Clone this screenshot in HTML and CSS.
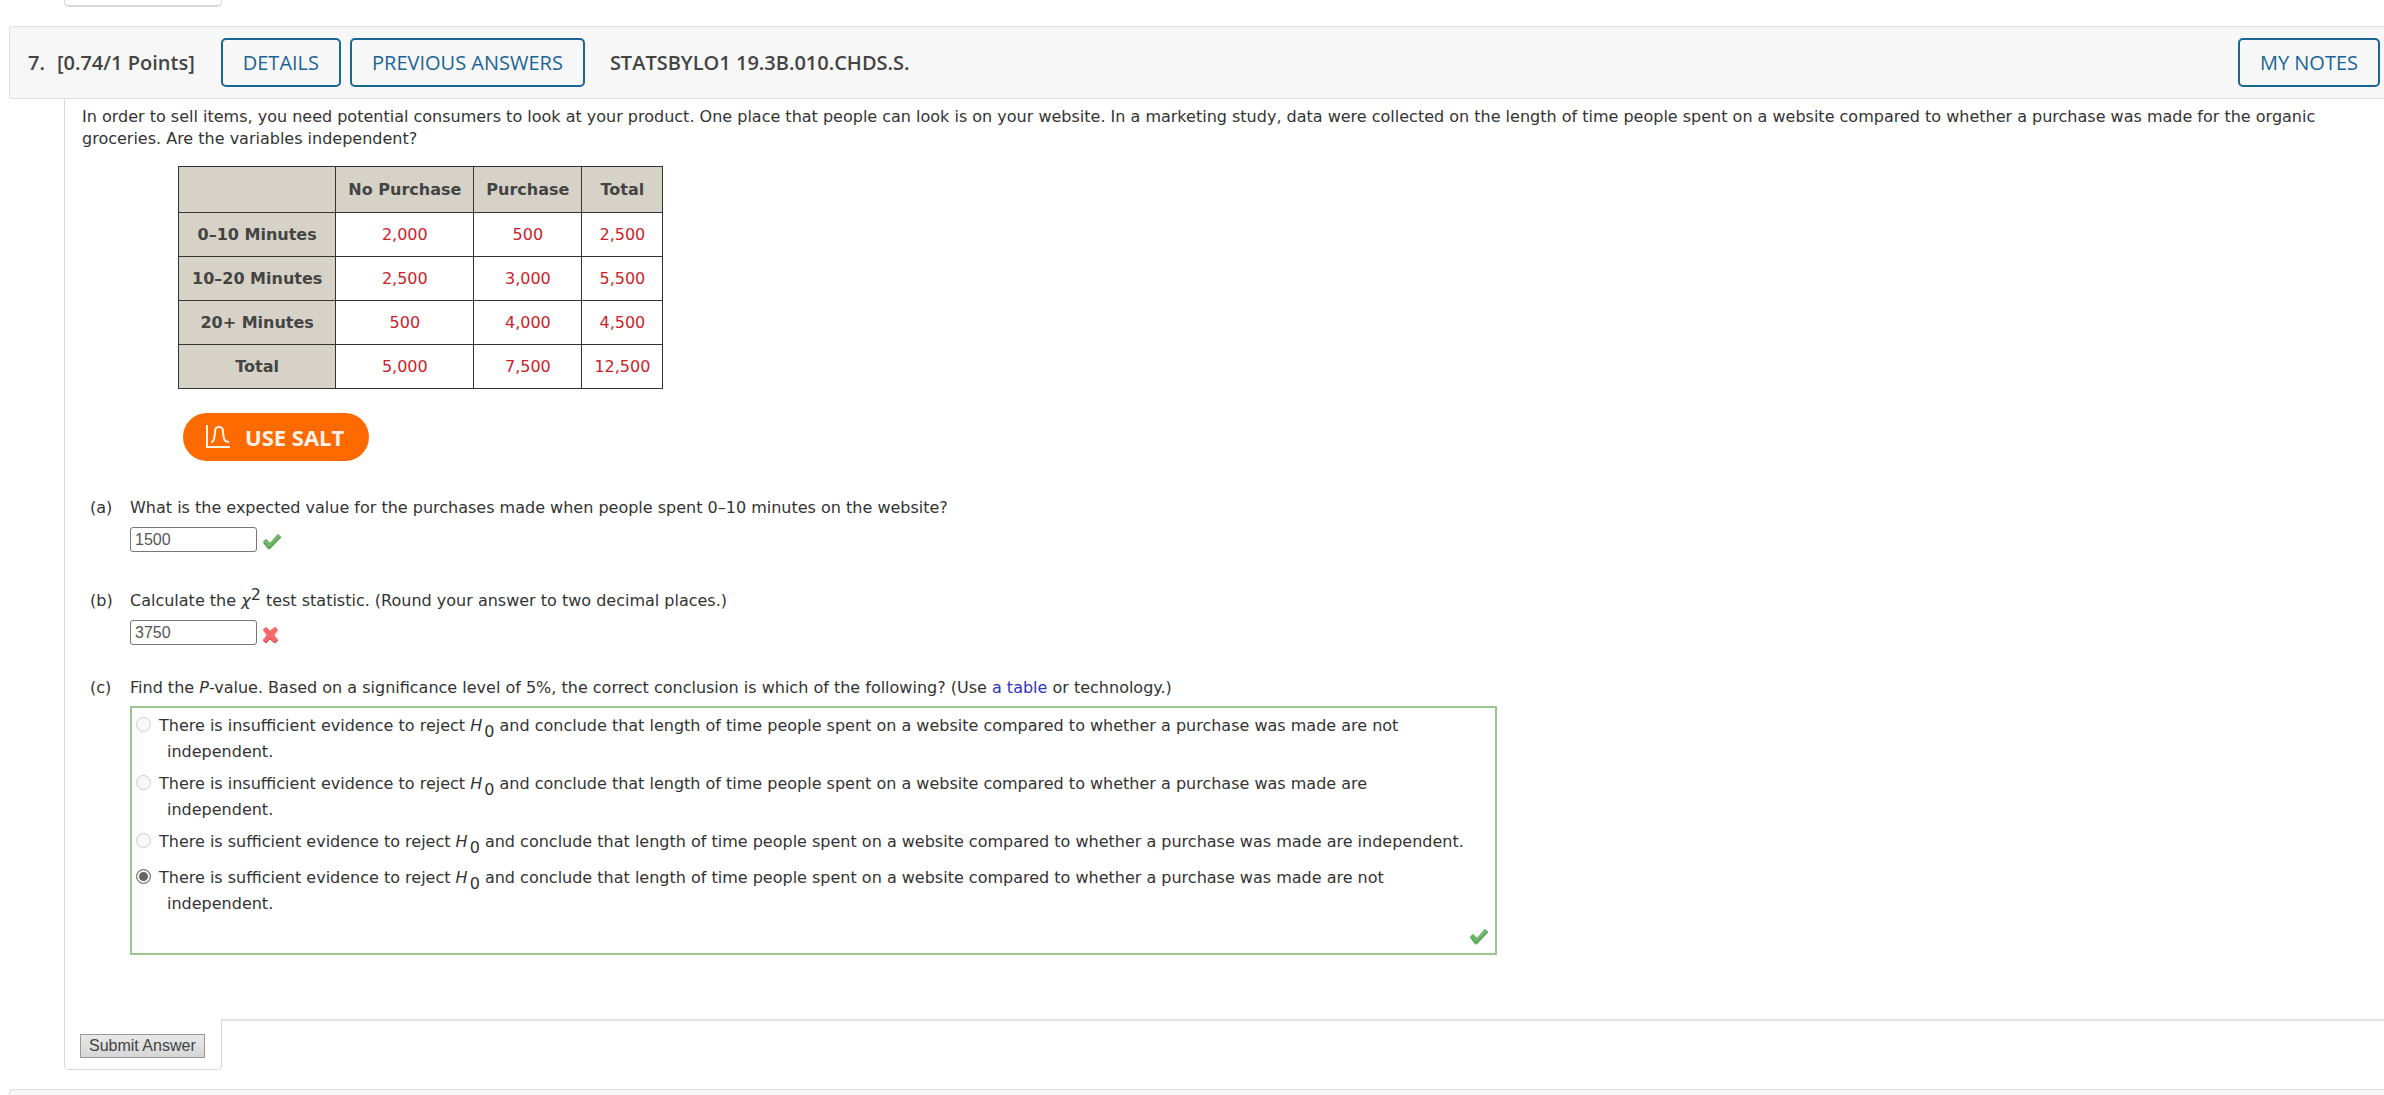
FILE: index.html
```html
<!DOCTYPE html>
<html lang="en">
<head>
  <meta charset="UTF-8" />
  <meta name="viewport" content="width=device-width, initial-scale=1.0"/>
  <title>Question 7</title>
  <link rel="stylesheet" href="styles.css">
</head>
<body>
  <!-- end of the previous question -->
  <div class="previous-tab"></div>

  <section class="question">
    <header class="question-header">
      <span class="number">7.</span>
      <span class="points">[0.74/1 Points]</span>
      <button type="button" class="header-btn">DETAILS</button>
      <button type="button" class="header-btn">PREVIOUS ANSWERS</button>
      <strong class="question-name">STATSBYLO1 19.3B.010.CHDS.S.</strong>
      <button type="button" class="header-btn notes">MY NOTES</button>
    </header>

    <form>
      <div class="question-body">
        <p class="intro">In order to sell items, you need potential consumers to look at your product. One place that people can look is on your website. In a marketing study, data were collected on the length of time people spent on a website compared to whether a purchase was made for the organic groceries. Are the variables independent?</p>

        <table class="data">
          <thead>
            <tr><th></th><th scope="col">No Purchase</th><th scope="col">Purchase</th><th scope="col">Total</th></tr>
          </thead>
          <tbody>
            <tr><th scope="row">0–10 Minutes</th><td>2,000</td><td>500</td><td>2,500</td></tr>
            <tr><th scope="row">10–20 Minutes</th><td>2,500</td><td>3,000</td><td>5,500</td></tr>
            <tr><th scope="row">20+ Minutes</th><td>500</td><td>4,000</td><td>4,500</td></tr>
            <tr><th scope="row">Total</th><td>5,000</td><td>7,500</td><td>12,500</td></tr>
          </tbody>
        </table>

        <button type="button" class="salt">
          <svg width="26" height="24" viewBox="0 0 26 24" fill="none" stroke="#fff3e8" stroke-width="2">
            <path d="M2 0V22H25"/>
            <path d="M6 17C9 17 9 14 10 8C10 3 11 2 14 2C17 2 18 3 18 8C19 14 19 17 24 17"/>
          </svg>
          USE SALT
        </button>

        <div class="part">
          <span class="letter">(a)</span>
          <div class="part-body">
            <label class="prompt" for="answer-a">What is the expected value for the purchases made when people spent 0–10 minutes on the website?</label>
            <div class="answer">
              <input type="text" id="answer-a" class="answer-box" value="1500">
              <svg class="mark" width="20" height="18" viewBox="0 0 20 18">
                <path d="M1 9L4 6L8 10L16 1L19 4L8 16L6 16Z" fill="#6db767" stroke="#8bc886" stroke-linejoin="round"/>
                <path d="M2 10L7 15L19 4" fill="none" stroke="#488f4c"/>
              </svg>
            </div>
          </div>
        </div>

        <div class="part">
          <span class="letter">(b)</span>
          <div class="part-body">
            <label class="prompt" for="answer-b">Calculate the <i>χ</i><sup>2</sup> test statistic. (Round your answer to two decimal places.)</label>
            <div class="answer">
              <input type="text" id="answer-b" class="answer-box" value="3750">
              <svg class="mark" width="20" height="18" viewBox="0 0 20 18">
                <path d="M1 4L4 1L8 5L13 1L16 4L12 9L16 14L13 17L8 13L4 17L1 14L5 9Z" fill="#f3696b" stroke="#f58a8a" stroke-linejoin="round"/>
                <path d="M1 14L4 17L8 13L13 17L16 14" fill="none" stroke="#dd4a4a"/>
              </svg>
            </div>
          </div>
        </div>

        <div class="part">
          <span class="letter">(c)</span>
          <div class="part-body">
            <p class="prompt">Find the <i>P</i>-value. Based on a significance level of 5%, the correct conclusion is which of the following? (Use <a href="#">a table</a> or technology.)</p>
            <div class="choices">
              <div class="choice">
                <input type="radio" name="answer-c" id="c1" disabled>
                <label for="c1">There is insufficient evidence to reject <i>H</i><sub>0</sub> and conclude that length of time people spent on a website compared to whether a purchase was made are not independent.</label>
              </div>
              <div class="choice">
                <input type="radio" name="answer-c" id="c2" disabled>
                <label for="c2">There is insufficient evidence to reject <i>H</i><sub>0</sub> and conclude that length of time people spent on a website compared to whether a purchase was made are independent.</label>
              </div>
              <div class="choice">
                <input type="radio" name="answer-c" id="c3" disabled>
                <label for="c3">There is sufficient evidence to reject <i>H</i><sub>0</sub> and conclude that length of time people spent on a website compared to whether a purchase was made are independent.</label>
              </div>
              <div class="choice">
                <input type="radio" name="answer-c" id="c4" disabled checked>
                <label for="c4">There is sufficient evidence to reject <i>H</i><sub>0</sub> and conclude that length of time people spent on a website compared to whether a purchase was made are not independent.</label>
              </div>
              <svg class="mark" width="20" height="18" viewBox="0 0 20 18">
                <path d="M1 9L4 6L8 10L16 1L19 4L8 16L6 16Z" fill="#6db767" stroke="#8bc886" stroke-linejoin="round"/>
                <path d="M2 10L7 15L19 4" fill="none" stroke="#488f4c"/>
              </svg>
            </div>
          </div>
        </div>
      </div>

      <div class="question-footer">
        <div class="submit-tab">
          <button type="submit" class="submit">Submit Answer</button>
        </div>
        <div class="footer-line"></div>
      </div>
    </form>
  </section>

  <!-- top of the next question -->
  <div class="next-header"></div>
</body>
</html>
```
FILE: styles.css
```css
* {
  box-sizing: border-box;
}

body {
  margin: 0;
  background: #fff;
  color: #333;
  font-family: Verdana, "DejaVu Sans", sans-serif;
  font-size: 16px;
  line-height: 22px;
}

p {
  margin: 0;
}

.previous-tab {
  width: 158px;
  height: 7px;
  margin: 0 0 19px 64px;
  border: 1px solid #d8d8d8;
  border-top: 0;
  border-bottom-width: 2px;
  border-radius: 0 0 5px 5px;
}

.question-header {
  display: flex;
  align-items: center;
  height: 73px;
  margin-left: 9px;
  padding: 0 4px 0 18px;
  background: #f7f7f7;
  border: 1px solid #dedede;
  border-right: 0;
  border-radius: 3px 0 0 3px;
  color: #444;
  font-family: "Open Sans", sans-serif;
  font-size: 20px;
  font-weight: 600;
}

.points {
  margin: 0 26px 0 12px;
}

.header-btn {
  height: 49px;
  margin-right: 9px;
  padding: 0 20px;
  background: transparent;
  border: 2px solid #1a6694;
  border-radius: 5px;
  color: #1a6496;
  font-family: inherit;
  font-size: 20px;
  font-weight: 500;
}

.question-name {
  margin-left: 16px;
  font-weight: 600;
}

.notes {
  margin: 0 0 0 auto;
}

.question-body {
  margin-left: 64px;
  padding: 7px 50px 64px 17px;
  border-left: 1px solid #d8d8d8;
}

.data {
  margin: 16px 0 0 96px;
  border-collapse: collapse;
}

.data th,
.data td {
  height: 44px;
  padding: 0 12px;
  border: 1px solid #333;
  text-align: center;
}

.data th {
  background: #d6d2c7;
  color: #444;
  font-weight: bold;
}

.data thead th {
  height: 46px;
}

.data tbody th {
  padding: 0 13px;
}

.data td {
  color: #cc2229;
}

.salt {
  display: flex;
  align-items: center;
  gap: 14px;
  height: 48px;
  margin: 24px 0 36px 101px;
  padding: 0 25px 0 22px;
  background: #ff6a00;
  border: 0;
  border-radius: 24px;
  color: #fff3e8;
  font-family: "Open Sans", sans-serif;
  font-size: 22px;
  font-weight: 700;
}

.part {
  display: flex;
  margin: 0 0 32px 8px;
}

.part:last-child {
  margin-bottom: 0;
}

.letter {
  width: 40px;
  align-self: first baseline;
}

.part-body {
  flex: 1;
  align-self: first baseline;
}

.prompt {
  display: block;
}

sup,
sub {
  font-size: 16px;
}

sub {
  margin-left: 2px;
  line-height: 18px;
  vertical-align: -6px;
}

a {
  color: #3330c0;
  text-decoration: none;
}

.answer {
  display: flex;
  gap: 5px;
  margin-top: 8px;
}

.answer-box {
  width: 127px;
  height: 25px;
  padding: 0 4px;
  border: 1px solid #767676;
  border-radius: 3px;
  color: #555;
  font-family: Arial, "Liberation Sans", sans-serif;
  font-size: 16px;
}

.answer .mark {
  margin-top: 6px;
}

.choices {
  display: flex;
  flex-direction: column;
  max-width: 1367px;
  margin-top: 7px;
  padding: 2px 6px 7px 4px;
  border: 2px solid #9bc58c;
}

.choice {
  display: flex;
  align-items: flex-start;
  gap: 8px;
  padding: 5px 18px 5px 0;
}

.choice label {
  padding-left: 8px;
  text-indent: -8px;
}

.choice input {
  appearance: none;
  flex: none;
  width: 15px;
  height: 15px;
  margin: 2px 0 0;
  background: #f8f8f8;
  border: 1px solid #ccc;
  border-radius: 50%;
}

.choice input:checked {
  background: #666;
  border-color: #777;
  box-shadow: inset 0 0 0 2px #f8f8f8;
}

.choices .mark {
  align-self: flex-end;
  margin-top: 8px;
}

.question-footer {
  display: flex;
}

.submit-tab {
  width: 158px;
  margin-left: 64px;
  padding: 15px 0 11px 15px;
  border: 1px solid #d8d8d8;
  border-top: 0;
  border-radius: 0 0 5px 5px;
}

.submit {
  height: 24px;
  padding: 0 8px;
  background: linear-gradient(#e8e8e8, #d6d6d6);
  border: 1px solid #999;
  color: #444;
  font-family: Arial, "Liberation Sans", sans-serif;
  font-size: 16px;
}

.footer-line {
  flex: 1;
  border-top: 2px solid #e2e2e2;
}

.next-header {
  height: 6px;
  margin: 19px 0 0 9px;
  background: #f7f7f7;
  border: 1px solid #dedede;
  border-width: 1px 0 0 1px;
  border-radius: 3px 0 0 0;
}
```
